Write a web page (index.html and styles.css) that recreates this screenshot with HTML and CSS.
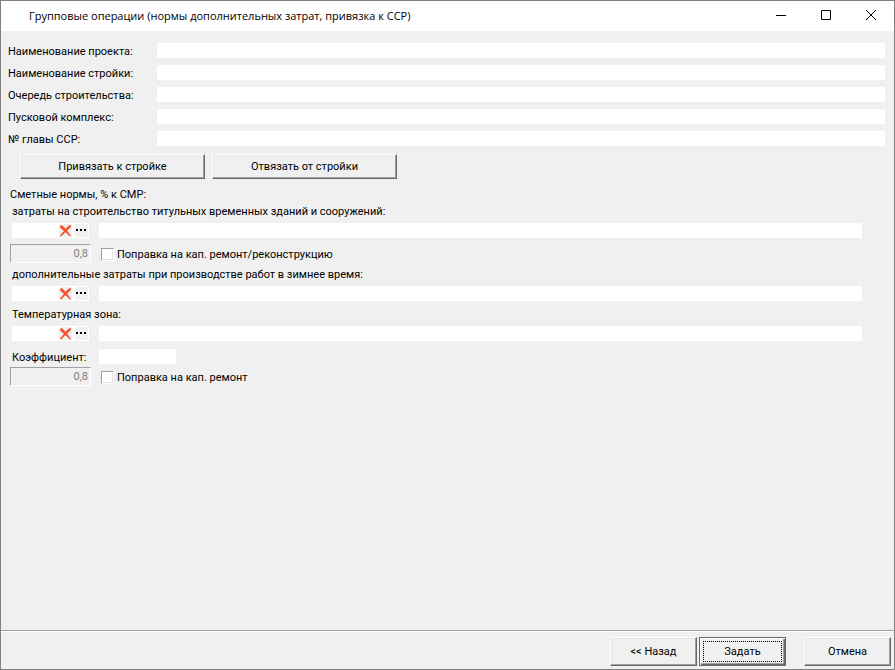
FILE: index.html
```html
<!DOCTYPE html>
<html lang="ru">
<head>
    <meta charset="UTF-8">
    <meta name="viewport" content="width=device-width, initial-scale=1.0">
    <title>Групповые операции</title>
    <link rel="stylesheet" href="styles.css">
</head>
<body>

<svg class="sprite" aria-hidden="true">
    <symbol id="icon-cross" viewBox="0 0 13 13">
        <path d="M1 2.2 Q2 .4 4 2 L7.2 5.6 L12 12 L11 12.4 L5.8 7.4 L1.4 4Z" fill="#f4512c"/>
        <path d="M12.2 1.6 Q11 .6 9.2 2 L5.6 6 L1 11.8 L2 12.6 L7.2 7.4 L11.8 3.2Z" fill="#f4512c"/>
    </symbol>
    <symbol id="icon-dots" viewBox="0 0 13 13">
        <path d="M1 5h2v2h-2zM5 5h2v2h-2zM9 5h2v2h-2z" fill="#000"/>
    </symbol>
</svg>

<div class="window">
    <header class="titlebar">
        <h1>Групповые операции (нормы дополнительных затрат, привязка к ССР)</h1>
        <div class="window-controls">
            <button type="button" aria-label="Свернуть">
                <svg width="12" height="12"><path d="M1 5.5h10" stroke="#000"/></svg>
            </button>
            <button type="button" aria-label="Развернуть">
                <svg width="12" height="12"><path d="M1.5 .5h9v9h-9z" fill="none" stroke="#000"/></svg>
            </button>
            <button type="button" aria-label="Закрыть">
                <svg width="12" height="12"><path d="M1 0l10 10M11 0l-10 10" stroke="#000"/></svg>
            </button>
        </div>
    </header>

    <main>
        <div class="project">
            <label for="project">Наименование проекта:</label>
            <input type="text" id="project">
            <label for="site">Наименование стройки:</label>
            <input type="text" id="site">
            <label for="stage">Очередь строительства:</label>
            <input type="text" id="stage">
            <label for="complex">Пусковой комплекс:</label>
            <input type="text" id="complex">
            <label for="chapter">№ главы ССР:</label>
            <input type="text" id="chapter">
        </div>

        <div class="actions">
            <button type="button" class="btn wide">Привязать к стройке</button>
            <button type="button" class="btn wide">Отвязать от стройки</button>
        </div>

        <section class="norms">
            <h2>Сметные нормы, % к СМР:</h2>

            <label class="caption" for="temp-code">затраты на строительство титульных временных зданий и сооружений:</label>
            <div class="picker">
                <div class="code">
                    <input type="text" id="temp-code">
                    <button type="button" aria-label="Очистить"><svg><use href="#icon-cross"/></svg></button>
                    <button type="button" aria-label="Выбрать"><svg><use href="#icon-dots"/></svg></button>
                </div>
                <input type="text" aria-label="Временные здания и сооружения">
            </div>
            <div class="correction">
                <input type="text" class="factor" value="0,8" aria-label="Поправка" disabled>
                <label><input type="checkbox">Поправка на кап. ремонт/реконструкцию</label>
            </div>

            <label class="caption" for="winter-code">дополнительные затраты при производстве работ в зимнее время:</label>
            <div class="picker">
                <div class="code">
                    <input type="text" id="winter-code">
                    <button type="button" aria-label="Очистить"><svg><use href="#icon-cross"/></svg></button>
                    <button type="button" aria-label="Выбрать"><svg><use href="#icon-dots"/></svg></button>
                </div>
                <input type="text" aria-label="Зимнее время">
            </div>

            <label class="caption zone" for="zone-code">Температурная зона:</label>
            <div class="picker">
                <div class="code">
                    <input type="text" id="zone-code">
                    <button type="button" aria-label="Очистить"><svg><use href="#icon-cross"/></svg></button>
                    <button type="button" aria-label="Выбрать"><svg><use href="#icon-dots"/></svg></button>
                </div>
                <input type="text" aria-label="Температурная зона">
            </div>

            <div class="coefficient">
                <label for="coefficient">Коэффициент:</label>
                <input type="text" id="coefficient">
            </div>
            <div class="correction last">
                <input type="text" class="factor" value="0,8" aria-label="Поправка" disabled>
                <label><input type="checkbox">Поправка на кап. ремонт</label>
            </div>
        </section>
    </main>

    <footer>
        <button type="button" class="btn">&lt;&lt; Назад</button>
        <button type="button" class="btn default"><span>Задать</span></button>
        <button type="button" class="btn cancel">Отмена</button>
    </footer>
</div>

</body>
</html>
```

FILE: styles.css
```css
* {
    box-sizing: border-box;
}

body {
    margin: 0;
    background-color: #f0f0f0;
    color: #000;
    font-family: Roboto, "Liberation Sans", sans-serif;
    font-size: 11px;
    line-height: 16px;
}

button,
input {
    margin: 0;
    padding: 0;
    border: none;
    border-radius: 0;
    font: inherit;
    color: inherit;
}

input[type="text"] {
    height: 15px;
    min-width: 0;
    background-color: #fff;
}

.sprite {
    position: absolute;
    width: 0;
    height: 0;
}

.window {
    display: flex;
    flex-direction: column;
    min-height: 100vh;
    border: 1px solid #808080;
}

/* Title bar */
.titlebar {
    display: flex;
    justify-content: space-between;
    height: 30px;
    padding-left: 28px;
    padding-right: 1px;
    background-color: #fff;
}

h1 {
    margin: 0;
    font-family: "Open Sans", "Noto Sans", sans-serif;
    font-size: 11px;
    font-weight: normal;
    line-height: 30px;
    white-space: nowrap;
}

.window-controls {
    display: flex;
}

.window-controls button {
    display: flex;
    align-items: center;
    justify-content: center;
    width: 45px;
    background: none;
}

main {
    flex: 1;
    padding: 12px 9px 12px 7px;
}

/* Project fields */
.project {
    display: grid;
    grid-template-columns: 149px 1fr;
    row-gap: 7px;
}

.project label,
.coefficient label {
    height: 15px;
    padding-top: 1px;
}

/* Raised buttons */
.btn {
    width: 87px;
    height: 29px;
    background-color: #f0f0f0;
    border: 1px solid;
    border-color: #fff #696969 #696969 #fff;
    box-shadow: inset -1px -1px #a0a0a0, inset 1px 1px #e3e3e3;
}

.btn.wide {
    width: 185px;
    height: 25px;
}

.btn.default {
    padding: 3px;
    border-color: #696969;
    box-shadow: inset 1px 1px #fff, inset -1px -1px #696969, inset -2px -2px #a0a0a0;
}

.btn.default span {
    display: flex;
    align-items: center;
    justify-content: center;
    height: 100%;
    border: 1px dotted #000;
}

.actions {
    display: flex;
    gap: 7px;
    margin: 8px 0 7px 12px;
}

/* Estimate norms */
.norms {
    padding-left: 2px;
    padding-right: 23px;
}

h2 {
    margin: 0;
    font-size: 11px;
    font-weight: normal;
    line-height: 17px;
}

.caption {
    display: block;
    padding: 1px 0 3px 2px;
}

.picker {
    display: grid;
    grid-template-columns: 77px 1fr;
    column-gap: 10px;
    padding-left: 2px;
}

.code {
    display: flex;
    align-items: center;
    gap: 3px;
    padding-right: 1px;
    background-color: #fff;
}

.code input {
    flex: 1;
}

.code button {
    width: 13px;
    height: 13px;
    background-color: #f0f0f0;
}

.code svg {
    display: block;
    width: 13px;
    height: 13px;
}

.correction {
    display: flex;
    align-items: center;
    gap: 10px;
    margin-top: 6px;
    margin-bottom: 3px;
}

.correction.last {
    margin-top: 3px;
}

.correction label {
    display: flex;
    align-items: center;
    gap: 3px;
    padding-top: 2px;
}

input.factor {
    width: 81px;
    height: 19px;
    padding-right: 2px;
    background-color: #f0f0f0;
    border: 1px solid;
    border-color: #a0a0a0 #fff #fff #a0a0a0;
    color: #808080;
    text-align: right;
}

input[type="checkbox"] {
    appearance: none;
    width: 13px;
    height: 13px;
    background-color: #fff;
    border: 1px solid;
    border-color: #a0a0a0 #fff #fff #a0a0a0;
    box-shadow: inset -1px -1px #e3e3e3;
}

input[type="checkbox"]:checked {
    background-color: #404040;
}

.zone {
    padding-top: 6px;
}

.coefficient {
    display: grid;
    grid-template-columns: 77px 77px;
    column-gap: 10px;
    margin-top: 8px;
    padding-left: 2px;
}

/* Bottom buttons */
footer {
    display: flex;
    justify-content: flex-end;
    gap: 2px;
    padding: 6px 3px 3px;
    border-top: 1px solid #a0a0a0;
    box-shadow: inset 0 1px #fff;
}

.cancel {
    margin-left: 16px;
}
```
